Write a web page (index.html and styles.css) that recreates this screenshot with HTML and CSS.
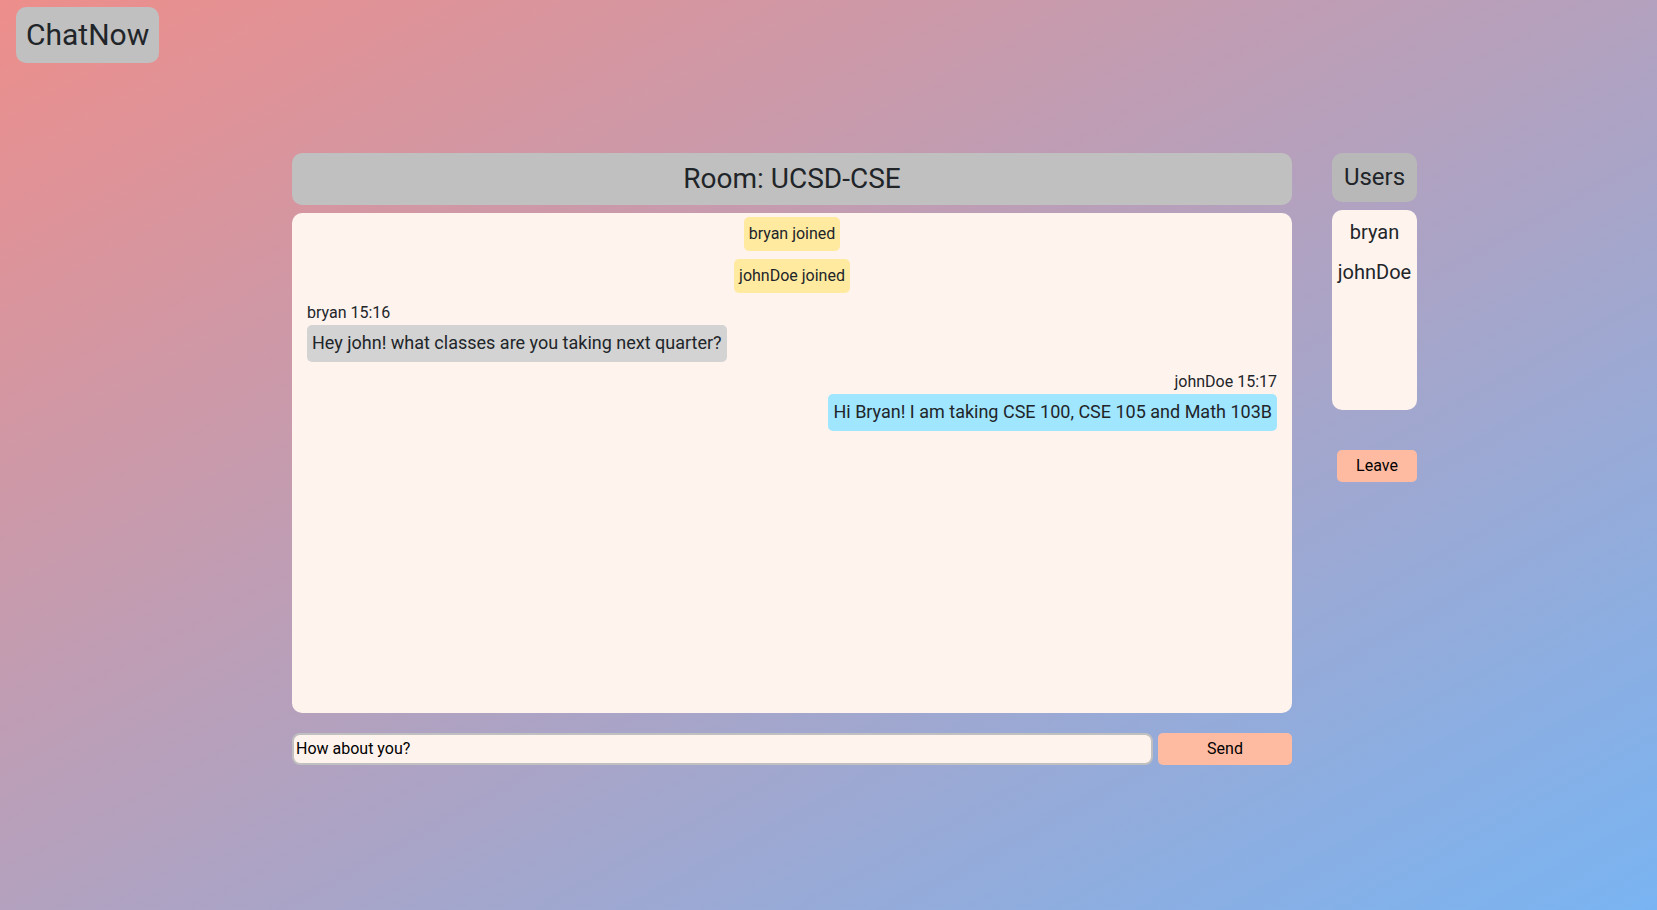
FILE: index.html
```html
<!DOCTYPE html>
<html lang="en">
<head>
<meta charset="utf-8">
<meta name="viewport" content="width=device-width, initial-scale=1">
<title>ChatNow</title>
<link rel="stylesheet" href="styles.css">
</head>
<body>
<header class="top">
  <h1 class="brand">ChatNow</h1>
</header>
<div class="layout">
  <main class="room">
    <h2 class="room-title">Room: UCSD-CSE</h2>
    <section class="messages" aria-label="Messages">
      <p class="notice">bryan joined</p>
      <p class="notice">johnDoe joined</p>
      <article class="message">
        <div class="meta">bryan 15:16</div>
        <p class="bubble">Hey john! what classes are you taking next quarter?</p>
      </article>
      <article class="message own">
        <div class="meta">johnDoe 15:17</div>
        <p class="bubble">Hi Bryan! I am taking CSE 100, CSE 105 and Math 103B</p>
      </article>
    </section>
    <form class="composer">
      <input class="composer-input" type="text" aria-label="Message" value="How about you?">
      <button class="button send" type="button">Send</button>
    </form>
  </main>
  <aside class="sidebar">
    <h3 class="users-title">Users</h3>
    <ul class="users">
      <li>bryan</li>
      <li>johnDoe</li>
    </ul>
    <button class="button leave" type="button">Leave</button>
  </aside>
</div>
</body>
</html>
```

FILE: styles.css
```css
* {
  box-sizing: border-box;
}

body {
  margin: 0;
  min-height: 100vh;
  font: 16px/24px Roboto, sans-serif;
  color: #212529;
  background: linear-gradient(to bottom right, #ed8e8b, #79b4f2);
}

h1, h2, h3, p, ul {
  margin: 0;
  padding: 0;
  font-weight: 400;
}

.top {
  display: flex;
  padding: 7px 16px;
}

.brand {
  padding: 10px;
  font-size: 30px;
  line-height: 36px;
  border-radius: 10px;
  background: #c0c0c0;
}

.layout {
  display: grid;
  grid-template-columns: 292fr 1000fr auto 240fr;
  align-items: start;
  padding: 83px 0 40px;
}

.room {
  grid-column: 2;
}

.room-title {
  padding: 9px 10px;
  font-size: 28px;
  line-height: 34px;
  text-align: center;
  border-radius: 10px;
  background: #c0c0c0;
}

.messages {
  display: flex;
  flex-direction: column;
  align-items: center;
  gap: 8px;
  min-height: 500px;
  margin-top: 8px;
  padding: 4px 15px;
  border-radius: 10px;
  background: #fff3ee;
}

.notice {
  padding: 5px;
  border-radius: 5px;
  background: #ffeaa0;
}

.message {
  display: flex;
  flex-direction: column;
  align-items: flex-start;
  align-self: stretch;
}

.own {
  align-items: flex-end;
}

.bubble {
  padding: 4px 5px 6px;
  font-size: 18px;
  line-height: 27px;
  border-radius: 5px;
  background: #d3d3d3;
}

.own .bubble {
  background: #a0e6ff;
}

.composer {
  display: flex;
  gap: 5px;
  margin-top: 20px;
}

.composer-input {
  flex: 1;
  min-width: 0;
  height: 32px;
  padding: 0 2px 2px;
  font: inherit;
  color: #000;
  border: 2px solid #c0c0c0;
  border-radius: 8px;
  background: #fff3ee;
}

.button {
  height: 32px;
  padding: 0;
  font: inherit;
  color: #000;
  border: 0;
  border-radius: 5px;
  background: #ffbba2;
}

.send {
  width: 134px;
}

.sidebar {
  display: flex;
  flex-direction: column;
  grid-column: 3;
  min-width: 85px;
  margin-left: 40px;
}

.users-title {
  padding: 10px;
  font-size: 24px;
  line-height: 29px;
  text-align: center;
  border-radius: 10px;
  background: #b8b8b8;
}

.users {
  display: flex;
  flex-direction: column;
  gap: 10px;
  min-height: 200px;
  margin-top: 8px;
  padding: 7px 5px;
  font-size: 20px;
  line-height: 30px;
  text-align: center;
  list-style: none;
  border-radius: 10px;
  background: #fff3ee;
}

.leave {
  align-self: flex-end;
  width: 80px;
  margin-top: 40px;
}
```
